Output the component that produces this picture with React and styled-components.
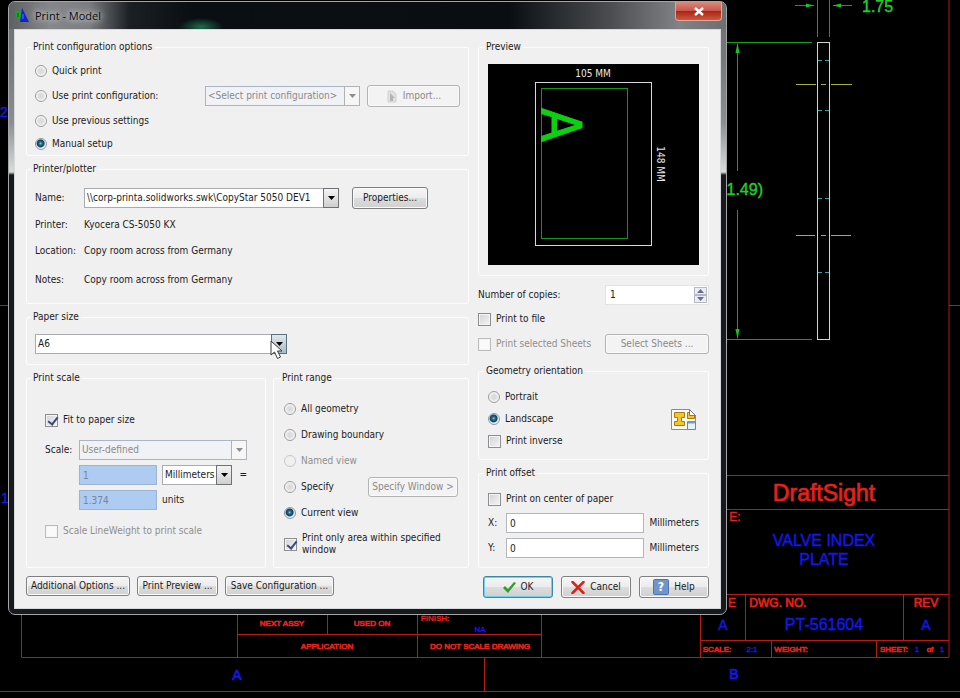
import React, { useState } from "react";
import styled, { createGlobalStyle, css } from "styled-components";

const GlobalStyle = createGlobalStyle`
  * {
    box-sizing: border-box;
  }

  body {
    margin: 0;
    background: #000;
    color: #1c1c1c;
    font-family: "DejaVu Sans Condensed", "Open Sans", sans-serif;
    font-size: 10px;
    line-height: 14px;
  }

  button,
  input,
  select {
    font: inherit;
    color: inherit;
    margin: 0;
  }
`;

const Desktop = styled.main`
  position: relative;
  min-height: 100vh;
  padding: 1px 8px;
  overflow: hidden;
`;

const DrawingSvg = styled.svg`
  position: absolute;
  inset: 0;
  width: 100%;
  height: 100%;
  font-family: "Liberation Sans", sans-serif;
`;

const Dialog = styled.form`
  position: relative;
  width: 75%;
  min-width: 719px;
  padding: 0 5px 5px;
  border: 1px solid #a4a6a8;
  border-radius: 7px;
  background: linear-gradient(
    #6c6e70 0,
    #77797b 60px,
    #8b8d8f 120px,
    #dcdcdc 170px,
    #17191c 173px,
    #17191c 100%
  );
`;

const TitleBar = styled.header`
  display: flex;
  align-items: center;
  height: 27px;
  margin: 0 -5px;
  padding-left: 6px;
  border-radius: 6px 6px 0 0;
  background:
    radial-gradient(ellipse 22px 9px at 192px 25px, #1d6b4c, transparent),
    linear-gradient(
      90deg,
      #5d5f61 0,
      #85878a 40px,
      #7a7c7f 80px,
      #1c2024 120px,
      #0a0f14 180px,
      #0a0e13 500px,
      #4a4c4f 600px,
      #808285 670px,
      #6c6e70 100%
    );
`;

const Title = styled.h1`
  flex: 1;
  margin: 0 0 0 6px;
  color: #0c0c0c;
  font-family: "Open Sans", "Noto Sans", sans-serif;
  font-size: 11px;
  font-weight: 400;
  text-shadow: 0 0 5px #d2d4d6, 0 0 8px #c2c4c6, 0 0 10px #b4b6b8;
`;

const CloseButton = styled.button`
  display: flex;
  align-items: center;
  justify-content: center;
  align-self: flex-start;
  width: 47px;
  height: 19px;
  margin-right: 4px;
  padding: 0;
  border: 1px solid #d9a79f;
  border-top: 0;
  border-radius: 0 0 4px 4px;
  background: linear-gradient(#d98a7e, #c9574a 48%, #ac2416 52%, #cc5a3c);
`;

const Content = styled.div`
  padding: 10px 11px;
  border: 1px solid #d6d8da;
  background: #f0f0f0;
`;

const Columns = styled.div`
  display: grid;
  grid-template-columns: minmax(0, 1fr) 231px;
  gap: 9px;
`;

const Column = styled.div`
  display: flex;
  flex-direction: column;
  gap: 6px;
`;

const Split = styled.div`
  display: grid;
  flex: 1;
  grid-template-columns: minmax(0, 1fr) 196px;
  gap: 7px;
`;

const Group = styled.fieldset`
  min-width: 0;
  margin: 0;
  padding: ${({ $pad }) => $pad || "5px 8px 0"};
  border: 1px solid #fcfcfc;
  border-radius: 2px;
`;

const Legend = styled.legend`
  height: 14px;
  margin-left: ${({ $wide }) => ($wide ? "-14px" : "-4px")};
  padding: 0 2px;
`;

const Row = styled.div`
  display: flex;
  align-items: center;
  gap: ${({ $gap = 5 }) => $gap}px;
  height: ${({ $h }) => $h}px;
`;

const Choice = styled.label`
  display: flex;
  align-items: center;
  gap: 5px;
  line-height: 12px;
  color: ${({ $off }) => ($off ? "#8f8f8f" : "inherit")};
`;

const Caption = styled.label`
  flex: none;
  width: ${({ $w }) => ($w ? `${$w}px` : "auto")};
`;

const Push = styled.span`
  margin-left: auto;
`;

const Radio = styled.input.attrs({ type: "radio" })`
  flex: none;
  appearance: none;
  width: 12px;
  height: 12px;
  border: 1px solid #9a9c9e;
  border-radius: 50%;
  background: radial-gradient(#dcdcdc 30%, #f8f8f8 70%);

  &:checked {
    border-color: #8a9aa6;
    background: radial-gradient(
      circle at 46% 44%,
      #8fc8dc 0,
      #2a6a84 20%,
      #14405a 44%,
      #d8e8f0 58%,
      #eef4f8 72%
    );
  }

  &:disabled {
    border-color: #c8c8c8;
    background: #f0f0f0;
  }
`;

const Check = styled.input.attrs({ type: "checkbox" })`
  position: relative;
  flex: none;
  appearance: none;
  width: 13px;
  height: 13px;
  border: 1px solid #8c8e90;
  background: linear-gradient(135deg, #cfd2d5, #f6f6f6);
  box-shadow: inset 0 0 0 1px #f4f4f4;

  &:checked::after {
    content: "";
    position: absolute;
    top: 0;
    left: 4px;
    width: 4px;
    height: 8px;
    border: solid #3b4878;
    border-width: 0 2px 2px 0;
    transform: rotate(38deg);
  }

  &:disabled {
    border-color: #bcbcbc;
    background: #fafafa;
  }
`;

const SelectFrame = styled.div`
  position: relative;
  width: ${({ $w }) => $w}px;
  height: 20px;
`;

const SelectInput = styled.select`
  appearance: none;
  width: 100%;
  height: 100%;
  padding: 0 14px 0 2px;
  border: 1px solid #a8abb0;
  border-radius: 0;
  background: #fff;

  &:disabled {
    border-color: #a9b4c6;
    background: #f1f2f5;
    color: #8a8a8a;
    opacity: 1;
  }
`;

const ArrowBox = styled.span`
  position: absolute;
  top: 0;
  right: 0;
  display: flex;
  align-items: center;
  justify-content: center;
  width: 16px;
  height: 100%;
  border: 1px solid #6f7173;
  background: linear-gradient(#f4f4f4, #cfcfcf);
  color: #000;
  pointer-events: none;

  ${({ $off }) =>
    $off &&
    css`
      border-color: #b0b2b6;
      background: #f6f6f6;
      color: #8e8e8e;
    `}

  ${({ $hot }) =>
    $hot &&
    css`
      border-color: #5b7180;
      background: linear-gradient(#dfe8ec, #a9bcc6);
    `}
`;

const Pointer = styled.svg`
  position: absolute;
  top: 6px;
  right: 2px;
  pointer-events: none;
`;

const TextBox = styled.input.attrs({ type: "text" })`
  width: ${({ $w }) => $w}px;
  height: 20px;
  padding: 0 3px;
  border: 1px solid #b4b6b9;
  border-radius: 0;
  background: #fff;

  &:disabled {
    border-color: #9fb3cd;
    background: #aecbf2;
    color: #75879f;
  }
`;

const SpinFrame = styled.div`
  display: flex;
  width: 104px;
  height: 20px;
  margin-left: auto;
  padding: 1px;
  border: 1px solid #e3e3e3;
  background: #fff;
`;

const SpinInput = styled.input.attrs({ type: "text", inputMode: "numeric" })`
  flex: 1;
  min-width: 0;
  padding: 0 3px;
  border: 0;
  background: none;
`;

const SpinButtons = styled.div`
  display: grid;
  grid-template-rows: 1fr 1fr;
  width: 13px;
`;

const SpinButton = styled.button`
  display: flex;
  align-items: center;
  justify-content: center;
  padding: 0;
  border: 1px solid #b6b8c2;
  background: #ececf2;
  color: #666c94;
`;

const Button = styled.button`
  display: inline-flex;
  align-items: center;
  justify-content: center;
  gap: 5px;
  width: ${({ $w }) => $w}px;
  height: ${({ $tall }) => ($tall ? 22 : 20)}px;
  padding: 0;
  border: 1px solid #7d7f81;
  border-radius: 3px;
  background: linear-gradient(#f6f6f6, #ececec 48%, #dcdcdc 52%, #d0d0d0);
  box-shadow: inset 0 0 0 1px #fafafa;
  white-space: nowrap;

  ${({ $primary }) =>
    $primary &&
    css`
      border-color: #3a86ad;
      box-shadow: inset 0 0 0 1px #6fd0f2;
    `}

  &:disabled {
    border-color: #b2b4b6;
    background: #f3f3f3;
    color: #8a8a8a;
  }
`;

const PropertiesButton = styled(Button)`
  margin-left: 13px;
`;

const ScaleGrid = styled.div`
  display: grid;
  grid-template-columns: 29px 78px minmax(0, 1fr);
  grid-template-rows: 26px 24px 26px;
  align-items: center;
  column-gap: 5px;
`;

const ScaleKind = styled.div`
  grid-column: 2 / 4;
`;

const Unit = styled.div`
  display: flex;
  align-items: center;
  gap: 7px;
`;

const SecondColumn = styled.div`
  grid-column: 2;
`;

const PreviewSvg = styled.svg`
  display: block;
  width: 100%;
  background: #000;
  font-family: "DejaVu Sans Condensed", sans-serif;
`;

const Orientation = styled.div`
  display: flex;
  align-items: center;
  justify-content: space-between;
  padding-right: 3px;
`;

const Footer = styled.footer`
  display: flex;
  justify-content: space-between;
  padding-top: 8px;
`;

const Actions = styled.div`
  display: flex;
  gap: ${({ $gap }) => $gap}px;
`;

const redLines = [
  "M949 0V657",
  "M949 305.5H960",
  "M0 305.5H8",
  "M700.5 475.5H949",
  "M700.5 509.5H949",
  "M700.5 594.5H949",
  "M700.5 640.5H949",
  "M21.5 657.5H949",
  "M0 691.5H960",
  "M700.5 475V657",
  "M745.5 594V640",
  "M903.5 594V640",
  "M771.5 640V657",
  "M876.5 640V657",
  "M21.5 600V657",
  "M237.5 600V657",
  "M327.5 600V634",
  "M417.5 600V657",
  "M541.5 600V657",
  "M237 634.5H541",
  "M484.5 657V691",
];

const greenLines = [
  "M817.5 0V37",
  "M829.5 0V37",
  "M795 5.5H814",
  "M833 5.5H852",
  "M727 42.5H812",
  "M727 339.5H812",
  "M737.5 44V171",
  "M737.5 210V338",
];

const notes = [
  { x: 824, y: 501, size: 23, text: "DraftSight", heavy: true },
  { x: 735, y: 521, size: 12, text: "E:" },
  { x: 778, y: 607, size: 12, text: "DWG. NO.", heavy: true },
  { x: 926, y: 607, size: 12, text: "REV", heavy: true },
  { x: 732, y: 607, size: 12, text: "E" },
  { x: 717, y: 652, size: 8, text: "SCALE:", heavy: true },
  { x: 791, y: 652, size: 8, text: "WEIGHT:", heavy: true },
  { x: 894, y: 652, size: 8, text: "SHEET:", heavy: true },
  { x: 930, y: 652, size: 8, text: "of", heavy: true },
  { x: 282, y: 626, size: 8, text: "NEXT ASSY", heavy: true },
  { x: 372, y: 626, size: 8, text: "USED ON", heavy: true },
  { x: 327, y: 649, size: 8, text: "APPLICATION", heavy: true },
  { x: 480, y: 649, size: 8, text: "DO NOT SCALE DRAWING", heavy: true },
  { x: 435, y: 621, size: 8, text: "FINISH:" },
];

const fields = [
  { x: 824, y: 546, size: 16, text: "VALVE INDEX" },
  { x: 824, y: 565, size: 16, text: "PLATE" },
  { x: 824, y: 630, size: 16, text: "PT-561604" },
  { x: 723, y: 630, size: 14, text: "A" },
  { x: 926, y: 630, size: 14, text: "A" },
  { x: 237, y: 680, size: 14, text: "A", heavy: true },
  { x: 734, y: 679, size: 14, text: "B", heavy: true },
  { x: 752, y: 652, size: 8, text: "2:1" },
  { x: 917, y: 652, size: 8, text: "1" },
  { x: 942, y: 652, size: 8, text: "1" },
  { x: 480, y: 632, size: 8, text: "NA" },
  { x: 4, y: 117, size: 14, text: "2" },
  { x: 5, y: 503, size: 14, text: "1" },
];

const Labels = ({ items, color }) => (
  <g fill={color} stroke={color} textAnchor="middle">
    {items.map(({ x, y, size, text, heavy }) => (
      <text
        key={`${x}-${y}`}
        x={x}
        y={y}
        fontSize={size}
        strokeWidth={heavy ? 0.7 : 0.4}
      >
        {text}
      </text>
    ))}
  </g>
);

const Drawing = () => (
  <DrawingSvg viewBox="0 0 960 698" preserveAspectRatio="xMinYMin slice">
    <path d={redLines.join("")} stroke="#b81a14" fill="none" />
    <path d={greenLines.join("")} stroke="#15a01d" fill="none" />
    <path
      d="M814 5.5l-8-2v4zM833 5.5l8-2v4zM737.5 43l-2 10h4zM737.5 339l-2-10h4z"
      fill="#17c421"
    />
    <rect
      x="817.5"
      y="42.5"
      width="12"
      height="297"
      stroke="#d4d4d4"
      fill="none"
    />
    <path
      d="M818 60.5h4m3 0h4M818 110.5h4m3 0h4M818 198.5h4m3 0h4M818 272.5h4m3 0h4"
      stroke="#3c9ca4"
    />
    <path
      d="M796 84.5h20m5 0h5m5 0h21M796 235.5h19m6 0h5m5 0h20"
      stroke="#b0ac3c"
    />
    <g fill="#1fd02a" stroke="#1fd02a" strokeWidth="0.4" fontSize="16">
      <text x="862" y="12">
        1.75
      </text>
      <text x="763" y="195" textAnchor="end">
        (11.49)
      </text>
    </g>
    <Labels items={notes} color="#e8201a" />
    <Labels items={fields} color="#1418e8" />
  </DrawingSvg>
);

const Triangle = ({ up }) => (
  <svg width="7" height="4" viewBox="0 0 7 4" aria-hidden="true">
    <path d={up ? "M0 4L3.5 0L7 4z" : "M0 0H7L3.5 4z"} fill="currentColor" />
  </svg>
);

const Select = ({ w, off, hot, children, ...rest }) => (
  <SelectFrame $w={w}>
    <SelectInput disabled={off} {...rest}>
      {children}
    </SelectInput>
    <ArrowBox $off={off} $hot={hot}>
      <Triangle />
    </ArrowBox>
    {hot && (
      <Pointer width="15" height="20" viewBox="0 0 15 20" aria-hidden="true">
        <path
          d="M1 1V15L4.500 12L7.500 18.500L10.500 17L7.500 11H12z"
          fill="#fff"
          stroke="#3a3a3a"
        />
      </Pointer>
    )}
  </SelectFrame>
);

const RadioRow = ({ h, name, value, current, onPick, off, gap, children }) => (
  <Row $h={h} $gap={gap}>
    <Choice $off={off}>
      <Radio
        name={name}
        checked={value === current}
        onChange={() => onPick(value)}
        disabled={off}
      />
      {value}
    </Choice>
    {children}
  </Row>
);

const AppIcon = () => (
  <svg width="14" height="15" viewBox="0 0 14 15" aria-hidden="true">
    <path d="M0 2L6 4V12L3 11C1 9 0 6 0 2z" fill="#1aa52c" />
    <path d="M7 0L14 14L5 14z" fill="#1420d8" />
    <path d="M3 5v4" stroke="#0c5c18" />
    <path d="M8 6v5" stroke="#5f74ff" />
  </svg>
);

const ImportIcon = () => (
  <svg width="12" height="13" viewBox="0 0 12 13" aria-hidden="true">
    <path d="M2 1h5l3 3v8H2z" fill="#e0e0e0" stroke="#d2d2d2" />
    <path d="M4 3l5 5-2 0v3H4z" fill="#b4b4b4" />
  </svg>
);

const OrientationIcon = () => (
  <svg width="25" height="21" viewBox="0 0 25 21" aria-hidden="true">
    <path
      d="M.5.500H18.500L24.500 6.500V20.500H.500z"
      fill="#fbfbf4"
      stroke="#8a8c90"
    />
    <path
      d="M3.500 3.500H13.500V8.500H10.500V12.500H13.500V16.500H3.500V12.500H6.500V8.500H3.500z"
      fill="#f5c52c"
      stroke="#a87a10"
    />
    <path
      d="M16.500 3.500H19.500V6.500H23.500V9.500H16.500z"
      fill="#f5c52c"
      stroke="#a87a10"
    />
    <path d="M18.500.500V6.500H24.500z" fill="#fff" stroke="#76787c" />
    <path d="M16.500 12.500H24.500V20.500H16.500z" fill="#e8f0fa" stroke="#6f87ab" />
    <path d="M17 13.500H24" stroke="#6f9bd8" strokeWidth="2" />
  </svg>
);

const OkIcon = () => (
  <svg width="13" height="11" viewBox="0 0 13 11" aria-hidden="true">
    <path d="M0 6L2 4L5 7L11 0L13 1L5 11z" fill="#2f9e2a" />
  </svg>
);

const CancelIcon = () => (
  <svg width="14" height="13" viewBox="0 0 14 13" aria-hidden="true">
    <path
      d="M1.500 1L12.500 12M12.500 1L1.500 12"
      stroke="#d8231c"
      strokeWidth="2.500"
      strokeLinecap="round"
    />
  </svg>
);

const HelpIcon = () => (
  <svg width="16" height="16" viewBox="0 0 16 16" aria-hidden="true">
    <rect
      x=".5"
      y=".5"
      width="15"
      height="15"
      rx="1"
      fill="#6f96cc"
      stroke="#4f74a8"
    />
    <text
      x="8"
      y="12"
      fill="#fff"
      fontSize="12"
      fontWeight="700"
      textAnchor="middle"
    >
      ?
    </text>
  </svg>
);

const Preview = () => (
  <PreviewSvg viewBox="0 0 211 201" role="img" aria-label="Page preview">
    <rect
      x="47.5"
      y="18.5"
      width="116"
      height="163"
      stroke="#d8d8d8"
      fill="none"
    />
    <rect
      x="53.5"
      y="24.5"
      width="86"
      height="150"
      stroke="#12931a"
      fill="none"
    />
    <text x="105" y="13" fontSize="10" fill="#e8e8e8" textAnchor="middle">
      105 MM
    </text>
    <text
      transform="translate(169 100) rotate(90)"
      fontSize="10"
      fill="#e8e8e8"
      textAnchor="middle"
    >
      148 MM
    </text>
    <text
      transform="translate(54 44) rotate(90)"
      fontSize="55"
      fill="#0ed012"
      stroke="#0ed012"
    >
      A
    </text>
  </PreviewSvg>
);

const App = () => {
  const [config, setConfig] = useState("Manual setup");
  const [range, setRange] = useState("Current view");
  const [orientation, setOrientation] = useState("Landscape");
  const [copies, setCopies] = useState(1);

  return (
    <Desktop>
      <GlobalStyle />
      <Drawing />
      <Dialog onSubmit={(e) => e.preventDefault()}>
        <TitleBar>
          <AppIcon />
          <Title>Print - Model</Title>
          <CloseButton type="button" aria-label="Close">
            <svg width="10" height="9" viewBox="0 0 10 9" aria-hidden="true">
              <path
                d="M1 1L9 8M9 1L1 8"
                stroke="#fff"
                strokeWidth="2.500"
                fill="none"
              />
            </svg>
          </CloseButton>
        </TitleBar>

        <Content>
          <Columns>
            <Column>
              <Group>
                <Legend>Print configuration options</Legend>
                <RadioRow
                  h={24}
                  name="config"
                  value="Quick print"
                  current={config}
                  onPick={setConfig}
                />
                <RadioRow
                  h={26}
                  gap={7}
                  name="config"
                  value="Use print configuration:"
                  current={config}
                  onPick={setConfig}
                >
                  <Push>
                    <Select w={155} off aria-label="Print configuration">
                      <option>&lt;Select print configuration&gt;</option>
                    </Select>
                  </Push>
                  <Button type="button" $w={93} $tall disabled>
                    <ImportIcon />
                    Import...
                  </Button>
                </RadioRow>
                <RadioRow
                  h={24}
                  name="config"
                  value="Use previous settings"
                  current={config}
                  onPick={setConfig}
                />
                <RadioRow
                  h={22}
                  name="config"
                  value="Manual setup"
                  current={config}
                  onPick={setConfig}
                />
              </Group>

              <Group $pad="5px 8px 10px">
                <Legend>Printer/plotter</Legend>
                <Row $h={34} $gap={0}>
                  <Caption $w={49} htmlFor="printer">
                    Name:
                  </Caption>
                  <Select w={255} id="printer">
                    <option>
                      \\corp-printa.solidworks.swk\CopyStar 5050 DEV1
                    </option>
                  </Select>
                  <PropertiesButton type="button" $w={76} $tall>
                    Properties...
                  </PropertiesButton>
                </Row>
                <Row $h={20} $gap={0}>
                  <Caption as="span" $w={49}>
                    Printer:
                  </Caption>
                  <span>Kyocera CS-5050 KX</span>
                </Row>
                <Row $h={32} $gap={0}>
                  <Caption as="span" $w={49}>
                    Location:
                  </Caption>
                  <span>Copy room across from Germany</span>
                </Row>
                <Row $h={26} $gap={0}>
                  <Caption as="span" $w={49}>
                    Notes:
                  </Caption>
                  <span>Copy room across from Germany</span>
                </Row>
              </Group>

              <Group $pad="5px 8px">
                <Legend>Paper size</Legend>
                <Row $h={30}>
                  <Select w={252} hot aria-label="Paper size">
                    <option>A6</option>
                  </Select>
                </Row>
              </Group>

              <Split>
                <Group $pad="18px 18px 0">
                  <Legend $wide>Print scale</Legend>
                  <Row $h={34}>
                    <Choice>
                      <Check defaultChecked />
                      Fit to paper size
                    </Choice>
                  </Row>
                  <ScaleGrid>
                    <label htmlFor="scale">Scale:</label>
                    <ScaleKind>
                      <Select w={168} off id="scale">
                        <option>User-defined</option>
                      </Select>
                    </ScaleKind>
                    <SecondColumn>
                      <TextBox
                        $w={78}
                        defaultValue="1"
                        aria-label="Paper length"
                        disabled
                      />
                    </SecondColumn>
                    <Unit>
                      <Select w={72} aria-label="Unit">
                        <option>Millimeters</option>
                      </Select>
                      =
                    </Unit>
                    <SecondColumn>
                      <TextBox
                        $w={78}
                        defaultValue="1.374"
                        id="units"
                        disabled
                      />
                    </SecondColumn>
                    <label htmlFor="units">units</label>
                  </ScaleGrid>
                  <Row $h={36}>
                    <Choice $off>
                      <Check disabled />
                      Scale LineWeight to print scale
                    </Choice>
                  </Row>
                </Group>

                <Group $pad="11px 10px 0">
                  <Legend>Print range</Legend>
                  {["All geometry", "Drawing boundary", "Named view"].map(
                    (item) => (
                      <RadioRow
                        key={item}
                        h={26}
                        name="range"
                        value={item}
                        current={range}
                        onPick={setRange}
                        off={item === "Named view"}
                      />
                    )
                  )}
                  <RadioRow
                    h={26}
                    name="range"
                    value="Specify"
                    current={range}
                    onPick={setRange}
                  >
                    <Push>
                      <Button type="button" $w={90} disabled>
                        Specify Window &gt;
                      </Button>
                    </Push>
                  </RadioRow>
                  <RadioRow
                    h={26}
                    name="range"
                    value="Current view"
                    current={range}
                    onPick={setRange}
                  />
                  <Row $h={36}>
                    <Choice>
                      <Check defaultChecked />
                      Print only area within specified window
                    </Choice>
                  </Row>
                </Group>
              </Split>
            </Column>

            <Column>
              <Group $pad="10px 9px">
                <Legend>Preview</Legend>
                <Preview />
              </Group>

              <div>
                <Row $h={26}>
                  <Caption htmlFor="copies">Number of copies:</Caption>
                  <SpinFrame>
                    <SpinInput
                      id="copies"
                      value={copies}
                      onChange={(e) => setCopies(Number(e.target.value) || 1)}
                    />
                    <SpinButtons>
                      <SpinButton
                        type="button"
                        aria-label="More copies"
                        onClick={() => setCopies(copies + 1)}
                      >
                        <Triangle up />
                      </SpinButton>
                      <SpinButton
                        type="button"
                        aria-label="Fewer copies"
                        onClick={() => setCopies(Math.max(1, copies - 1))}
                      >
                        <Triangle />
                      </SpinButton>
                    </SpinButtons>
                  </SpinFrame>
                </Row>
                <Row $h={22}>
                  <Choice>
                    <Check />
                    Print to file
                  </Choice>
                </Row>
                <Row $h={28}>
                  <Choice $off>
                    <Check disabled />
                    Print selected Sheets
                  </Choice>
                  <Push>
                    <Button type="button" $w={104} disabled>
                      Select Sheets ...
                    </Button>
                  </Push>
                </Row>
              </div>

              <Group $pad="8px 9px 7px">
                <Legend>Geometry orientation</Legend>
                <Orientation>
                  <div>
                    {["Portrait", "Landscape"].map((item) => (
                      <RadioRow
                        key={item}
                        h={22}
                        name="orientation"
                        value={item}
                        current={orientation}
                        onPick={setOrientation}
                      />
                    ))}
                    <Row $h={22}>
                      <Choice>
                        <Check />
                        Print inverse
                      </Choice>
                    </Row>
                  </div>
                  <OrientationIcon />
                </Orientation>
              </Group>

              <Group $pad="7px 9px 6px">
                <Legend>Print offset</Legend>
                <Row $h={24}>
                  <Choice>
                    <Check />
                    Print on center of paper
                  </Choice>
                </Row>
                <Row $h={24}>
                  <Caption $w={13} htmlFor="offset-x">
                    X:
                  </Caption>
                  <TextBox $w={140} id="offset-x" defaultValue="0" />
                  Millimeters
                </Row>
                <Row $h={26}>
                  <Caption $w={13} htmlFor="offset-y">
                    Y:
                  </Caption>
                  <TextBox $w={140} id="offset-y" defaultValue="0" />
                  Millimeters
                </Row>
              </Group>
            </Column>
          </Columns>

          <Footer>
            <Actions $gap={7}>
              <Button type="button" $w={104}>
                Additional Options ...
              </Button>
              <Button type="button" $w={81}>
                Print Preview ...
              </Button>
              <Button type="button" $w={109}>
                Save Configuration ...
              </Button>
            </Actions>
            <Actions $gap={8}>
              <Button type="submit" $w={70} $tall $primary>
                <OkIcon />
                OK
              </Button>
              <Button type="button" $w={70} $tall>
                <CancelIcon />
                Cancel
              </Button>
              <Button type="button" $w={70} $tall>
                <HelpIcon />
                Help
              </Button>
            </Actions>
          </Footer>
        </Content>
      </Dialog>
    </Desktop>
  );
};

export default App;
